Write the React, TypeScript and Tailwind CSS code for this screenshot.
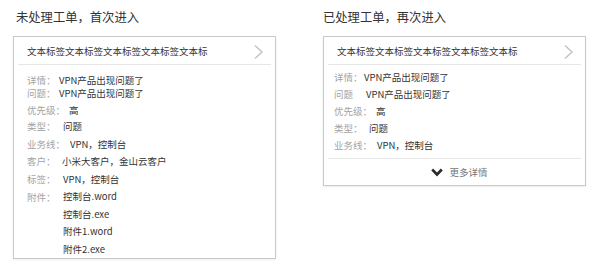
const font = { fontFamily: '"Noto Sans CJK SC", "Noto Sans", sans-serif' };

type Row = { label: string; value: React.ReactNode; gap: string; h: string };

function ChevronRight() {
  return (
    <svg width="11" height="16" viewBox="0 0 11 16" fill="none">
      <path d="M2 1.5 L9 8 L2 14.5" stroke="#c6c6c6" strokeWidth="1.6" />
    </svg>
  );
}

function ChevronDown() {
  return (
    <svg width="12" height="9" viewBox="0 0 12 9" fill="none">
      <path d="M1.2 1.5 L6 6.5 L10.8 1.5" stroke="#2a2a2a" strokeWidth="2.6" />
    </svg>
  );
}

function Card({ children }: { children?: React.ReactNode }) {
  return (
    <div className="w-[263px] border border-[#c9c9c9] bg-white shadow-[0_1px_2px_rgba(0,0,0,0.08)]">
      <div className="h-[27px] flex items-center justify-between pl-[13px] pr-[11px] pt-[2px]">
        <span className="text-[9.5px] text-[#333]">文本标签文本标签文本标签文本标签文本标</span>
        <ChevronRight />
      </div>
      <div className="mx-[4px] border-t border-[#e6e6e6]" />
      {children}
    </div>
  );
}

function Line({ row }: { row: Row }) {
  return (
    <div className={`flex items-start text-[9.5px] leading-[13px] ${row.h}`}>
      <span className={`text-[#a3a3a3] ${row.gap}`}>{row.label}</span>
      <div className="text-[#333]">{row.value}</div>
    </div>
  );
}

const leftRows: Row[] = [
  { label: "详情：", value: "VPN产品出现问题了", gap: "w-[32px]", h: "h-[13px]" },
  { label: "问题：", value: "VPN产品出现问题了", gap: "w-[32px]", h: "h-[17px]" },
  { label: "优先级：", value: "高", gap: "w-[42px]", h: "h-[16px]" },
  { label: "类型：", value: "问题", gap: "w-[36px]", h: "h-[18px]" },
  { label: "业务线：", value: "VPN，控制台", gap: "w-[43px]", h: "h-[17px]" },
  { label: "客户：", value: "小米大客户，金山云客户", gap: "w-[35px]", h: "h-[18px]" },
  { label: "标签：", value: "VPN，控制台", gap: "w-[36px]", h: "h-[18px]" },
];

const rightRows: Row[] = [
  { label: "详情：", value: "VPN产品出现问题了", gap: "w-[30px]", h: "h-[17px]" },
  { label: "问题", value: "VPN产品出现问题了", gap: "w-[32px]", h: "h-[17px]" },
  { label: "优先级：", value: "高", gap: "w-[42px]", h: "h-[17px]" },
  { label: "类型：", value: "问题", gap: "w-[35px]", h: "h-[17px]" },
  { label: "业务线：", value: "VPN，控制台", gap: "w-[43px]", h: "h-[17px]" },
];

const files = ["控制台.word", "控制台.exe", "附件1.word", "附件2.exe"];

export default function App() {
  return (
    <div className="w-[600px] h-[268px] bg-white flex gap-[47px] pl-[13px] pt-[10px]" style={font}>
      <div className="flex flex-col">
        <h2 className="pl-[3px] text-[12.3px] leading-[14px] text-[#333] mb-[12px]">未处理工单，首次进入</h2>
        <Card>
          <div className="pl-[13px] pt-[9px]">
            {leftRows.map((r) => (
              <Line key={r.label} row={r} />
            ))}
            <div className="flex items-start text-[9.5px]">
              <span className="text-[#a3a3a3] w-[36px] leading-[13px]">附件：</span>
              <div className="text-[#333] flex flex-col leading-[17.5px] -mt-[3px]">
                {files.map((f) => (
                  <span key={f}>{f}</span>
                ))}
              </div>
            </div>
          </div>
        </Card>
      </div>
      <div className="flex flex-col">
        <h2 className="text-[12.3px] leading-[14px] text-[#333] mb-[12px]">已处理工单，再次进入</h2>
        <Card>
          <div className="pl-[10px] pt-[6px]">
            {rightRows.map((r) => (
              <Line key={r.label} row={r} />
            ))}
          </div>
          <div className="mx-[4px] mt-[2px] border-t border-[#e6e6e6]" />
          <div className="h-[26px] flex items-center justify-center gap-[6px] pl-[10px]">
            <ChevronDown />
            <span className="text-[9.5px] text-[#777]">更多详情</span>
          </div>
        </Card>
      </div>
    </div>
  );
}
